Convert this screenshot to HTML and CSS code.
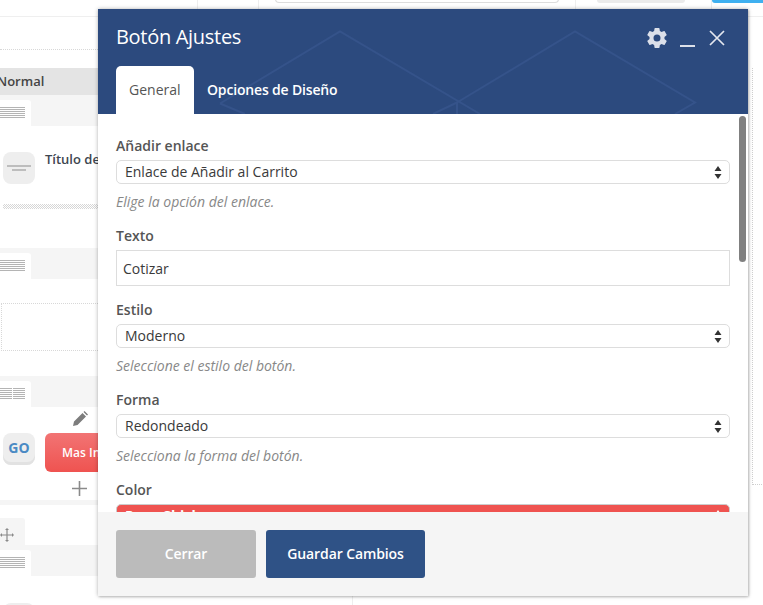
FILE: index.html
```html
<!DOCTYPE html>
<html lang="es">
<head>
<meta charset="utf-8">
<title>Botón Ajustes</title>
<link rel="stylesheet" href="styles.css">
</head>
<body>
<div class="page">
  <div class="topbar">
    <div class="top-cell top-a"></div>
    <div class="top-cell top-b"></div>
    <div class="top-cell top-c"><div class="top-input"></div></div>
    <div class="top-cell top-d"><div class="top-btn"></div></div>
    <div class="top-cell top-e"><div class="top-blue"></div></div>
  </div>
  <div class="builder">
    <div class="canvas">
      <div class="dots-row"></div>
      <div class="normal">Normal</div>
      <div class="band"><div class="tab"><svg class="stripes" width="25" height="12" viewBox="0 0 25 12"><path d="M0 .5h25M0 2.5h25M0 4.5h25M0 6.5h25M0 8.5h25M0 10.5h25" stroke="#b4b4b4"/></svg></div></div>
      <div class="element el-title">
        <div class="el-icon"><svg width="32" height="32" viewBox="0 0 32 32"><path d="M4 14h24M9 18h14" stroke="#bdbdbd" stroke-width="2"/></svg></div>
        <div class="el-name">Título de la empresa</div>
      </div>
      <div class="dotted-bar"></div>
      <div class="band"><div class="tab"><svg class="stripes" width="25" height="12" viewBox="0 0 25 12"><path d="M0 .5h25M0 2.5h25M0 4.5h25M0 6.5h25M0 8.5h25M0 10.5h25" stroke="#b4b4b4"/></svg></div></div>
      <div class="empty-box"></div>
      <div class="band"><div class="tab"><svg class="stripes" width="25" height="12" viewBox="0 0 25 12"><path d="M0 .5h12M0 2.5h12M0 4.5h12M0 6.5h12M0 8.5h12M0 10.5h12M13 .5h12M13 2.5h12M13 4.5h12M13 6.5h12M13 8.5h12M13 10.5h12" stroke="#b4b4b4"/></svg></div></div>
      <div class="tool-row tool-pencil"><svg width="16" height="16" viewBox="0 0 16 16"><path d="M1 15l1-4.500 8.500-8.500 3.500 3.500-8.500 8.500zM11.500 1l1-1 3.500 3.500-1 1z" fill="#7d7d7d"/></svg></div>
      <div class="element el-button">
        <div class="el-icon el-go">GO</div>
        <div class="red-btn">Mas Información</div>
      </div>
      <div class="tool-row tool-plus"><svg width="15" height="15" viewBox="0 0 15 15"><path d="M7.500 0v15M0 7.500h15" stroke="#8a8a8a" stroke-width="1.600"/></svg></div>
      <div class="thin-band"></div>
      <div class="move-tab"><svg width="14" height="14" viewBox="0 0 14 14"><path d="M7 1v12M1 7h12" stroke="#8a8a8a" stroke-width="1.200"/><path d="M7 0l2 2H5zM7 14l2-2H5zM0 7l2-2v4zM14 7l-2-2v4z" fill="#8a8a8a"/></svg></div>
      <div class="band"><div class="tab"><svg class="stripes" width="25" height="12" viewBox="0 0 25 12"><path d="M0 .5h25M0 2.500h25M0 4.500h25M0 6.500h25M0 8.500h25M0 10.500h25" stroke="#b4b4b4"/></svg></div></div>
      <div class="element el-last">
        <div class="el-icon"></div>
        <div class="el-name">Título de la empresa</div>
      </div>
    </div>
    <div class="side"><div class="side-box"></div></div>
  </div>

  <div class="modal">
    <header class="modal-head">
      <svg class="pattern" width="650" height="105" viewBox="0 0 650 105" fill="none">
        <path d="M122 94.500L242 22.500 382 105M359 93.500V105M359 93.500L477 22.500 597 93.500 577 105M359 93.500L335 105M122 94.500L147 105" stroke="#35538a" stroke-width="2"/>
      </svg>
      <div class="head-top">
        <h1 class="modal-title">Botón Ajustes</h1>
        <div class="head-icons">
          <svg class="ico-gear" width="24" height="24" viewBox="0 0 24 24"><path fill="#dce0ea" d="M19.430 12.980c.04-.32.07-.64.07-.98s-.03-.66-.07-.98l2.110-1.650a.5.5 0 0 0 .12-.64l-2-3.460a.5.5 0 0 0-.61-.22l-2.490 1a7.300 7.300 0 0 0-1.690-.98l-.38-2.650A.49.49 0 0 0 14 2h-4a.49.49 0 0 0-.49.420l-.38 2.650c-.61.25-1.170.59-1.690.98l-2.490-1a.49.49 0 0 0-.61.220l-2 3.460a.49.49 0 0 0 .12.640l2.110 1.650c-.04.320-.07.650-.07.980s.03.660.07.980l-2.110 1.650a.5.5 0 0 0-.12.640l2 3.460c.12.220.39.300.61.220l2.490-1c.52.400 1.080.730 1.690.980l.38 2.650c.03.240.24.420.49.420h4c.25 0 .46-.18.49-.42l.38-2.650c.61-.25 1.170-.59 1.690-.98l2.490 1c.23.090.49 0 .61-.22l2-3.460a.5.5 0 0 0-.12-.64zM12 15.500a3.500 3.500 0 1 1 0-7 3.500 3.500 0 0 1 0 7z"/></svg>
          <span class="ico-min"></span>
          <svg class="ico-close" width="16" height="16" viewBox="0 0 16 16"><path d="M1 1l14 14M15 1L1 15" stroke="#e4e7ef" stroke-width="1.700"/></svg>
        </div>
      </div>
      <nav class="tabs">
        <span class="tab-item tab-on">General</span>
        <span class="tab-item">Opciones de Diseño</span>
      </nav>
    </header>

    <div class="modal-body">
      <div class="field">
        <div class="label">Añadir enlace</div>
        <div class="select"><span class="select-text">Enlace de Añadir al Carrito</span><svg class="arrows" width="8" height="13" viewBox="0 0 8 13"><path d="M4 0l3.500 5H.5zM4 13L.5 8h7z" fill="#333"/></svg></div>
        <div class="help">Elige la opción del enlace.</div>
      </div>
      <div class="field">
        <div class="label">Texto</div>
        <div class="input">Cotizar</div>
      </div>
      <div class="field">
        <div class="label">Estilo</div>
        <div class="select"><span class="select-text">Moderno</span><svg class="arrows" width="8" height="13" viewBox="0 0 8 13"><path d="M4 0l3.500 5H.5zM4 13L.5 8h7z" fill="#333"/></svg></div>
        <div class="help">Seleccione el estilo del botón.</div>
      </div>
      <div class="field">
        <div class="label">Forma</div>
        <div class="select"><span class="select-text">Redondeado</span><svg class="arrows" width="8" height="13" viewBox="0 0 8 13"><path d="M4 0l3.500 5H.5zM4 13L.5 8h7z" fill="#333"/></svg></div>
        <div class="help">Selecciona la forma del botón.</div>
      </div>
      <div class="field">
        <div class="label">Color</div>
        <div class="select select-red"><span class="select-text">Rosa Chicle</span><svg class="arrows" width="8" height="13" viewBox="0 0 8 13"><path d="M4 0l3.500 5H.5zM4 13L.5 8h7z" fill="#fff"/></svg></div>
      </div>
      <div class="scrollbar"></div>
    </div>

    <footer class="modal-foot">
      <button class="btn btn-close">Cerrar</button>
      <button class="btn btn-save">Guardar Cambios</button>
    </footer>
  </div>
</div>
</body>
</html>
```
FILE: styles.css
```css
* { box-sizing: border-box; }
html, body { margin: 0; padding: 0; }
body { font-family: "Open Sans", "Liberation Sans", sans-serif; background: #fff; color: #444; }
.page { position: relative; width: 763px; height: 605px; overflow: hidden; }

.topbar { display: flex; height: 17px; border-bottom: 1px solid #efefef; }
.top-cell { height: 16px; border-right: 1px solid #eee; }
.top-a { width: 198px; }
.top-b { width: 61px; }
.top-c { width: 317px; padding-left: 16px; }
.top-d { width: 136px; padding-left: 21px; }
.top-e { width: 51px; border-right: 0; overflow: hidden; }
.top-input { width: 284px; height: 4px; margin-top: -1px; border: 1px solid #ddd; border-top: 0; border-radius: 0 0 6px 6px; background: #fff; }
.top-btn { width: 88px; height: 3px; background: #ebebeb; border-radius: 0 0 3px 3px; }
.top-blue { width: 60px; height: 3px; background: #3fb0f0; border-radius: 0 0 0 4px; }

.builder { display: flex; height: 588px; }
.canvas { width: 353px; height: 588px; flex: none; border-right: 1px solid #eee; }
.side { flex: 1; padding: 51px 0 0 0; }
.side-box { margin-left: 399px; width: 12px; height: 417px; border-left: 1px dotted #cfcfcf; border-bottom: 1px dotted #cfcfcf; }

.dots-row { height: 33px; border-bottom: 1px dotted #d8d8d8; }
.normal { margin-top: 18px; height: 27px; background: #e4e4e4; font-size: 13px; font-weight: 600; line-height: 27px; color: #444; text-indent: -3px; }
.band { height: 31px; background: #f5f5f5; padding-top: 5px; }
.tab { width: 31px; height: 26px; background: #fff; border-radius: 0 3px 0 0; padding-top: 7px; }
.stripes { display: block; }

.element { display: flex; padding-left: 3px; }
.el-icon { flex: none; width: 32px; height: 32px; border-radius: 8px; background: #eee; }
.el-name { margin: -2px 0 0 10px; font-size: 13px; font-weight: 600; color: #3d4650; white-space: nowrap; line-height: 18px; }
.el-title { height: 78px; padding-top: 26px; }
.dotted-bar { height: 5px; margin-left: 3px; margin-bottom: 39px; background-image: repeating-conic-gradient(#d6d6d6 0 25%, #fff 0 50%); background-size: 2px 2px; }
.empty-box { margin: 24px 0 25px 1px; height: 48px; border: 1px dotted #d8d8d8; border-right: 0; }
.tool-row { display: flex; padding-left: 72px; }
.tool-pencil { height: 26px; padding-top: 4px; }
.el-button { height: 39px; }
.el-go { display: flex; align-items: center; justify-content: center; font-size: 14px; font-weight: 700; color: #4a8ac4; box-shadow: inset 0 -3px 0 #e2e2e2; padding-bottom: 4px; }
.red-btn { margin-left: 10px; width: 140px; height: 39px; padding-left: 17px; border-radius: 6px; background: linear-gradient(#f27474, #ef5350); color: #fff; font-size: 12px; font-weight: 600; line-height: 39px; white-space: nowrap; }
.tool-plus { height: 28px; padding-top: 9px; }
.thin-band { height: 5px; background: #f5f5f5; }
.move-tab { margin-top: 13px; width: 25px; height: 27px; background: #f5f5f5; border-radius: 0 3px 0 0; padding-top: 7px; }
.el-last { padding-top: 27px; }

.modal { position: absolute; left: 98px; top: 9px; width: 650px; height: 587px; display: flex; flex-direction: column; background: #fff; box-shadow: 0 0 4px rgba(0,0,0,.3), 1px 1px 2px rgba(0,0,0,.15); }
.modal-head { position: relative; flex: none; height: 105px; background: #2c4a7e; overflow: hidden; }
.pattern { position: absolute; left: 0; top: 0; }
.head-top { position: relative; display: flex; justify-content: space-between; align-items: flex-start; padding: 14px 23px 0 18px; height: 57px; }
.modal-title { margin: 0; font-size: 20px; font-weight: 400; line-height: 27px; color: #fff; letter-spacing: -.3px; }
.head-icons { display: flex; align-items: flex-start; padding-top: 5px; }
.ico-gear { margin-top: -2px; }
.ico-min { width: 15px; height: 2px; margin: 17px 0 0 11px; background: #dce0ea; }
.ico-close { margin: 2px 0 0 14px; }
.tabs { position: relative; display: flex; padding-left: 18px; }
.tab-item { height: 48px; padding: 0 13px; font-size: 14px; font-weight: 600; letter-spacing: -.17px; line-height: 47px; color: #fff; white-space: nowrap; }
.tab-on { width: 78px; background: #fff; border-radius: 5px 5px 0 0; font-weight: 400; letter-spacing: 0; color: #555; }

.modal-body { position: relative; flex: 1; padding: 22px 18px 0; overflow: hidden; background: #fff; }
.field { margin-bottom: 14px; }
.label { height: 20px; margin-bottom: 4px; font-size: 14px; font-weight: 600; line-height: 20px; color: #555; }
.select { display: flex; align-items: center; justify-content: space-between; height: 24px; padding: 0 7px 0 8px; border: 1px solid #ddd; border-radius: 5px; background: #fff; font-size: 14px; color: #3a3a3a; }
.select-text { margin-top: -2px; }
.select-red { background: #ef5350; border-color: #ccc; color: #fff; font-weight: 700; }
.input { height: 36px; padding: 1px 0 0 6px; border: 1px solid #ddd; font-size: 14px; line-height: 34px; color: #3a3a3a; }
.help { margin-top: 8px; height: 20px; font-size: 14px; font-style: italic; line-height: 20px; color: #888; }
.scrollbar { position: absolute; right: 2px; top: 2px; width: 7px; height: 146px; border-radius: 4px; background: #808080; }

.modal-foot { flex: none; display: flex; gap: 10px; height: 84px; padding: 18px; background: #f5f5f5; }
.btn { height: 48px; padding: 0 0 2px; border: 0; border-radius: 3px; font-family: inherit; font-size: 14px; font-weight: 600; letter-spacing: -.1px; color: #fff; }
.btn-close { width: 140px; background: #bbb; }
.btn-save { width: 159px; background: #2f5286; }
```
